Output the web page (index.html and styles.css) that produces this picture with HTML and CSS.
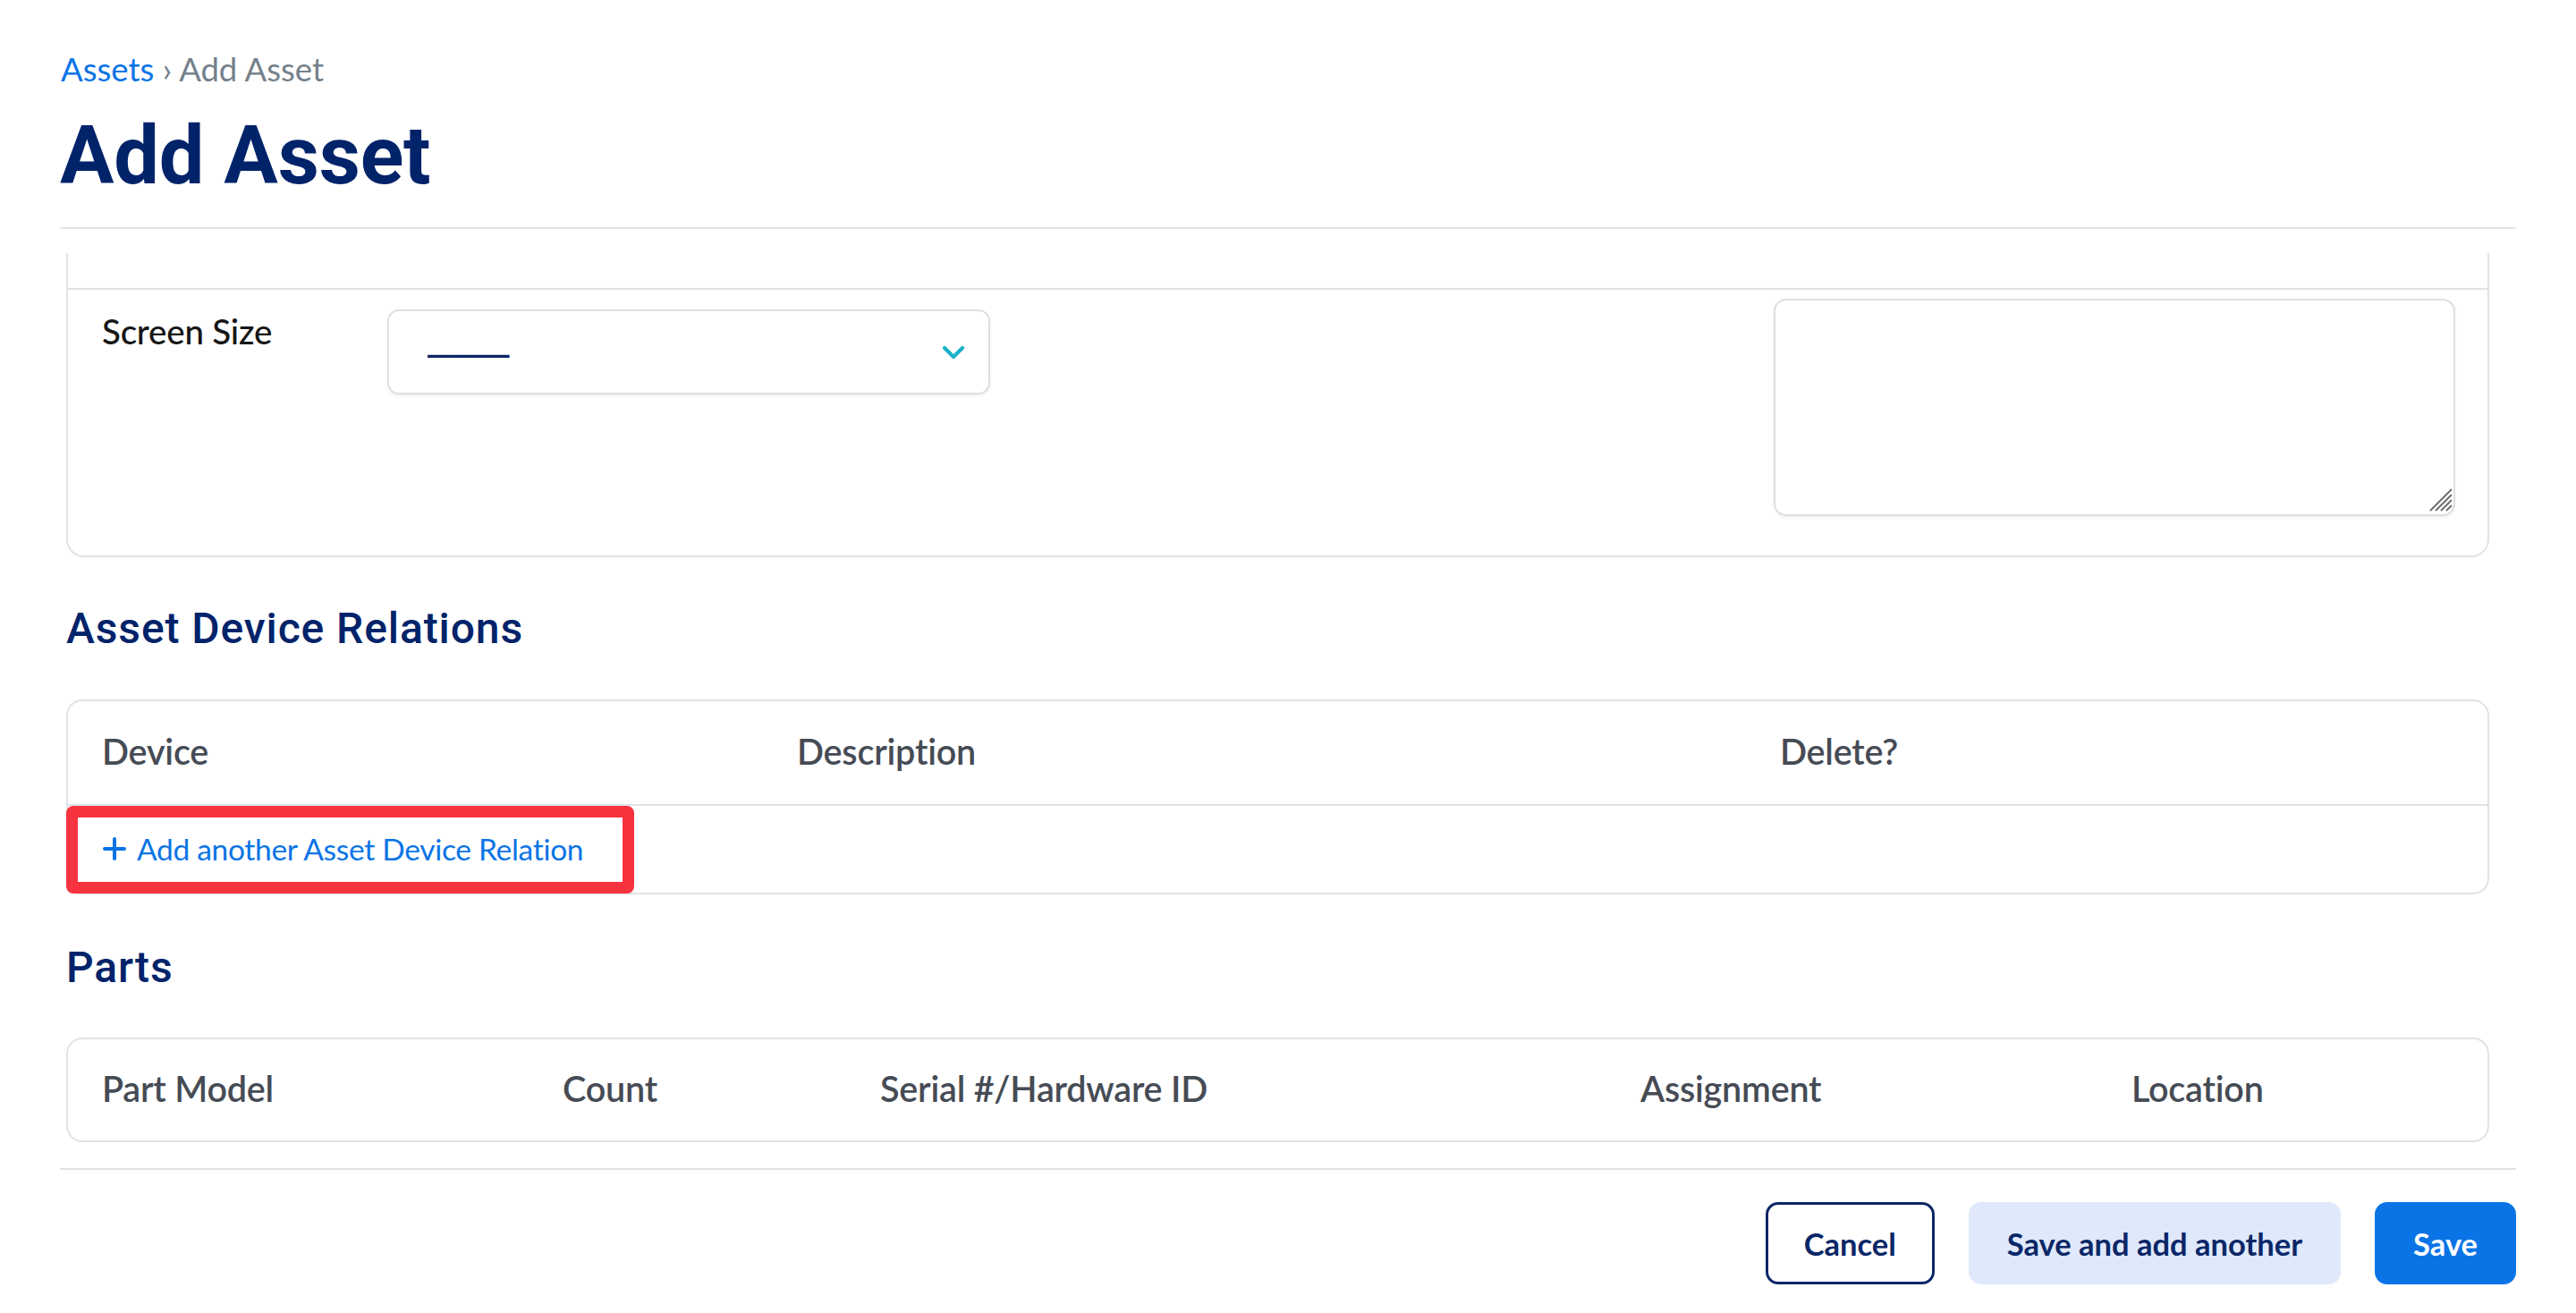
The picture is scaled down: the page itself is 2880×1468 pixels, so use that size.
FILE: index.html
```html
<!DOCTYPE html>
<html lang="en">
<head>
<meta charset="utf-8">
<title>Add Asset</title>
<link rel="stylesheet" href="styles.css">
</head>
<body>
<div class="page">
  <header class="page-header">
    <nav class="breadcrumb"><a class="crumb-link" href="#">Assets</a> <span class="crumb-sep">›</span> <span class="crumb-current">Add Asset</span></nav>
    <h1 class="title">Add Asset</h1>
  </header>

  <div class="scroll">
    <section class="card fields">
      <div class="row row-prev"></div>
      <div class="row row-field">
        <label class="field-label">Screen Size</label>
        <div class="select">
          <span class="select-value">---------</span>
          <svg class="chevron" width="26" height="16" viewBox="0 0 26 16"><path d="M3 3 L13 13 L23 3" fill="none" stroke="#19b1c6" stroke-width="4.2" stroke-linecap="round" stroke-linejoin="round"/></svg>
        </div>
        <div class="spacer"></div>
        <div class="textarea">
          <svg class="grip" width="26" height="26" viewBox="0 0 26 26"><path d="M1 25 L25 1 M7 25 L25 7 M13 25 L25 13 M19 25 L25 19" stroke="#6f6f6f" stroke-width="2"/></svg>
        </div>
      </div>
    </section>

    <h2 class="section-title">Asset Device Relations</h2>
    <div class="table relations">
      <div class="thead">
        <div class="th">Device</div>
        <div class="th">Description</div>
        <div class="th">Delete?</div>
      </div>
      <div class="add-row">
        <a class="add-link" href="#"><svg class="plus" width="26" height="26" viewBox="0 0 26 26"><path d="M13 2 V24 M2 13 H24" stroke="#0a74e6" stroke-width="4" stroke-linecap="round"/></svg>Add another Asset Device Relation</a>
        <span class="highlight"></span>
      </div>
    </div>

    <h2 class="section-title">Parts</h2>
    <div class="table parts">
      <div class="thead">
        <div class="th">Part Model</div>
        <div class="th">Count</div>
        <div class="th">Serial #/Hardware ID</div>
        <div class="th">Assignment</div>
        <div class="th">Location</div>
      </div>
    </div>
  </div>

  <footer class="actions">
    <button class="btn btn-outline">Cancel</button>
    <button class="btn btn-light">Save and add another</button>
    <button class="btn btn-primary">Save</button>
  </footer>
</div>
</body>
</html>
```

FILE: styles.css
```css
* { box-sizing: border-box; }

html, body {
  margin: 0;
  padding: 0;
  background: #ffffff;
}

body {
  font-family: "Lato", "Inter", sans-serif;
  color: #1a1a1a;
}

.page {
  padding: 0 67px;
}

/* Header */
.page-header {
  padding-top: 55px;
  padding-bottom: 26px;
  border-bottom: 2px solid #e0e3e7;
}

.breadcrumb {
  font-size: 36.5px;
  line-height: 44px;
  padding-left: 1px;
}

.crumb-link {
  color: #0a74e6;
  text-decoration: none;
}

.crumb-sep,
.crumb-current {
  color: #74818c;
}

.title {
  margin: 23px 0 0 0;
  font-family: "Roboto", sans-serif;
  font-weight: 700;
  font-size: 90px;
  line-height: 106px;
  color: #00236a;
  letter-spacing: -0.2px;
}

/* Scroll area */
.scroll {
  margin-top: 27px;
  overflow: hidden;
  padding: 0 30px 29px 7px;
}

.card {
  border: 2px solid #e0e3e7;
  border-radius: 20px;
}

.fields {
  margin-top: -60px;
}

.row-prev {
  height: 99px;
  border-bottom: 2px solid #e0e3e7;
}

.row-field {
  display: grid;
  grid-template-columns: 319px 674px 1fr 762px;
  align-items: start;
  padding: 10px 36px 44px 38px;
}

.field-label {
  margin-top: 15px;
  font-size: 38.5px;
  line-height: 42px;
  font-weight: 500;
  color: #161616;
  letter-spacing: -0.2px;
}

.select {
  margin-top: 12px;
  height: 95px;
  border: 2px solid #dcdfe3;
  border-radius: 13px;
  box-shadow: 0 2px 3px rgba(0, 0, 0, 0.06);
  display: flex;
  align-items: center;
  justify-content: space-between;
  padding: 0 26px 0 41px;
}

.select-value {
  font-family: "DejaVu Sans", sans-serif;
  font-size: 40px;
  line-height: 40px;
  color: #0b2668;
  letter-spacing: -4.3px;
  margin-top: 4px;
}

.textarea {
  height: 243px;
  border: 2px solid #dcdfe3;
  border-radius: 14px;
  box-shadow: 0 2px 3px rgba(0, 0, 0, 0.06);
  display: flex;
  align-items: flex-end;
  justify-content: flex-end;
  padding: 0 1px 3px 0;
}

/* Section titles */
.section-title {
  margin: 52px 0 52px 0;
  font-family: "Roboto", sans-serif;
  font-weight: 500;
  font-size: 48px;
  line-height: 55px;
  color: #00236a;
  letter-spacing: 0.9px;
}

/* Tables */
.table {
  border: 2px solid #e0e3e7;
  border-radius: 18px;
}

.thead {
  display: grid;
  align-items: center;
}

.th {
  padding-left: 38px;
  padding-bottom: 4px;
  font-size: 39.5px;
  font-weight: 600;
  color: #464b55;
  letter-spacing: -0.2px;
}

.relations .thead {
  grid-template-columns: 777px 1099px 1fr;
  height: 117px;
  border-bottom: 2px solid #e0e3e7;
}

.parts .thead {
  grid-template-columns: 515px 355px 850px 549px 1fr;
  height: 113px;
}

.add-row {
  position: relative;
  height: 97px;
  display: flex;
  align-items: center;
  padding-left: 39px;
  padding-bottom: 2px;
}

.add-link {
  display: flex;
  align-items: center;
  gap: 12px;
  color: #0a74e6;
  text-decoration: none;
  font-size: 33.5px;
  letter-spacing: -0.3px;
}

.highlight {
  position: absolute;
  left: -2px;
  top: 0;
  bottom: -1px;
  width: 635px;
  border: 13px solid #f7333f;
  border-radius: 8px;
  pointer-events: none;
}

.relations + .section-title {
  margin-top: 54px;
  margin-bottom: 51px;
}

/* Footer */
.actions {
  border-top: 2px solid #e0e3e7;
  padding-top: 36px;
  display: flex;
  justify-content: flex-end;
  gap: 38px;
}

.btn {
  height: 92px;
  padding: 0 40px;
  border-radius: 14px;
  font-family: "Lato", sans-serif;
  font-size: 34.5px;
  font-weight: 700;
  border: 3px solid transparent;
  cursor: pointer;
}

.btn-outline {
  background: #ffffff;
  border-color: #0b2767;
  color: #0b2767;
}

.btn-light {
  background: #dfe9fb;
  border-color: #dfe9fb;
  color: #0b2767;
}

.btn-primary {
  background: #0a74e6;
  border-color: #0a74e6;
  color: #ffffff;
}
```
